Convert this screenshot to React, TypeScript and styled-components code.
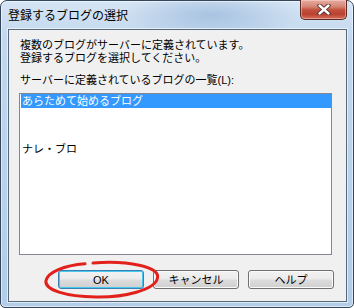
import React from 'react';
import styled, { createGlobalStyle } from 'styled-components';

const GlobalStyle = createGlobalStyle`
  html, body {
    margin: 0;
    padding: 0;
    background: #ffffff;
  }
  * {
    box-sizing: border-box;
  }
`;

const BLOGS = ['あらためて始めるブログ', '', '', 'ナレ・ブロ'];

export default function App() {
  const selected = 0;

  return (
    <>
      <GlobalStyle />
      <Window>
        <TitleBar>
          <Title>登録するブログの選択</Title>
          <CloseButton aria-label="閉じる">
            <svg width="14" height="11" viewBox="0 0 14 11">
              <path d="M2.5 1.5 L11.5 9.5 M11.5 1.5 L2.5 9.5" stroke="#4a2a26" strokeWidth="4.2" strokeLinecap="round" />
              <path d="M2.5 1.5 L11.5 9.5 M11.5 1.5 L2.5 9.5" stroke="#ffffff" strokeWidth="2.4" strokeLinecap="round" />
            </svg>
          </CloseButton>
        </TitleBar>

        <Client>
          <Message>
            <Line>複数のブログがサーバーに定義されています。</Line>
            <Line>登録するブログを選択してください。</Line>
          </Message>
          <Label>サーバーに定義されているブログの一覧(L):</Label>

          <ListBox>
            {BLOGS.map((name, i) => (
              <ListRow key={i}>
                <ListItem $selected={i === selected}>{name}</ListItem>
              </ListRow>
            ))}
          </ListBox>

          <ButtonRow>
            <Button $default>OK</Button>
            <Button>キャンセル</Button>
            <Button>ヘルプ</Button>
          </ButtonRow>
        </Client>

        {/* hand drawn red circle around the OK button */}
        <Annotation width="354" height="308" viewBox="0 0 354 308">
          <path
            d="M93 263 C128 260 160 267 157.5 278 C155 290 124 297.5 96 297 C66 296.5 44 290 46 280.5 C48 272 64 265.5 85 263.8"
            fill="none"
            stroke="#e3211c"
            strokeWidth="3"
            strokeLinecap="round"
          />
        </Annotation>
      </Window>
    </>
  );
}

const Window = styled.div`
  position: relative;
  width: 354px;
  height: 308px;
  display: flex;
  flex-direction: column;
  padding: 0 6px 5px 7px;
  border: 1px solid #34465b;
  border-radius: 7px 7px 5px 5px;
  background:
    radial-gradient(ellipse 90px 26px at 210px 14px, rgba(120, 160, 205, 0.45), rgba(120, 160, 205, 0) 100%),
    linear-gradient(180deg, #d6e5f4 0%, #c3d8ee 12%, #b9d1ea 60%, #b3cce7 100%);
  box-shadow: inset 0 0 0 1px rgba(255, 255, 255, 0.55);
  font-family: 'Liberation Sans', 'Noto Sans CJK JP', sans-serif;
`;

const TitleBar = styled.div`
  height: 28px;
  display: flex;
  align-items: center;
  flex-shrink: 0;
`;

const Title = styled.div`
  font-size: 12px;
  line-height: 14px;
  color: #000000;
  padding-top: 1px;
`;

const CloseButton = styled.div`
  margin-left: auto;
  align-self: flex-start;
  margin-top: -1px;
  width: 47px;
  height: 20px;
  display: flex;
  align-items: center;
  justify-content: center;
  border: 1px solid #5c2a24;
  border-top: none;
  border-radius: 0 0 5px 5px;
  background: linear-gradient(180deg, #e6ada3 0%, #d68574 35%, #c2503d 52%, #b9422f 75%, #d4705a 100%);
  box-shadow: inset 0 0 0 1px rgba(255, 220, 210, 0.45);
`;

const Client = styled.div`
  flex: 1;
  display: flex;
  flex-direction: column;
  padding: 9px 12px 12px 10px;
  background: #f0f0f0;
  border: 1px solid #56687c;
  box-shadow: 0 0 0 1px rgba(255, 255, 255, 0.6);
  font-size: 11px;
  color: #000000;
`;

const Message = styled.div`
  padding-left: 1px;
  display: flex;
  flex-direction: column;
`;

const Line = styled.div`
  height: 13px;
  line-height: 13px;
  white-space: nowrap;
`;

const Label = styled.div`
  margin-top: 9px;
  line-height: 12px;
  padding-left: 1px;
  white-space: nowrap;
`;

const ListBox = styled.div`
  margin-top: 7px;
  margin-right: 2px;
  flex: 1;
  min-height: 0;
  background: #ffffff;
  border: 1px solid #828790;
  padding: 0 0 0 1px;
  overflow: hidden;
`;

const ListRow = styled.div`
  height: 16px;
`;

const ListItem = styled.div<{ $selected?: boolean }>`
  height: 14px;
  line-height: 14px;
  padding-left: 1px;
  white-space: nowrap;
  color: ${({ $selected }) => ($selected ? '#ffffff' : '#000000')};
  background: ${({ $selected }) => ($selected ? '#3399ff' : 'transparent')};
`;

const ButtonRow = styled.div`
  margin-top: 15px;
  display: flex;
  justify-content: flex-end;
  gap: 9px;
`;

const Button = styled.div<{ $default?: boolean }>`
  width: 86px;
  height: 19px;
  display: flex;
  align-items: center;
  justify-content: center;
  font-size: 11px;
  line-height: 12px;
  color: #000000;
  border: 1px solid ${({ $default }) => ($default ? '#3c7fb1' : '#707070')};
  border-radius: 3px;
  background: linear-gradient(180deg, #f2f2f2 0%, #ebebeb 48%, #dddddd 52%, #cfcfcf 100%);
  box-shadow: inset 0 0 0 1px ${({ $default }) => ($default ? '#48c8f0' : '#fbfbfb')};
`;

const Annotation = styled.svg`
  position: absolute;
  left: -1px;
  top: -1px;
  pointer-events: none;
`;
